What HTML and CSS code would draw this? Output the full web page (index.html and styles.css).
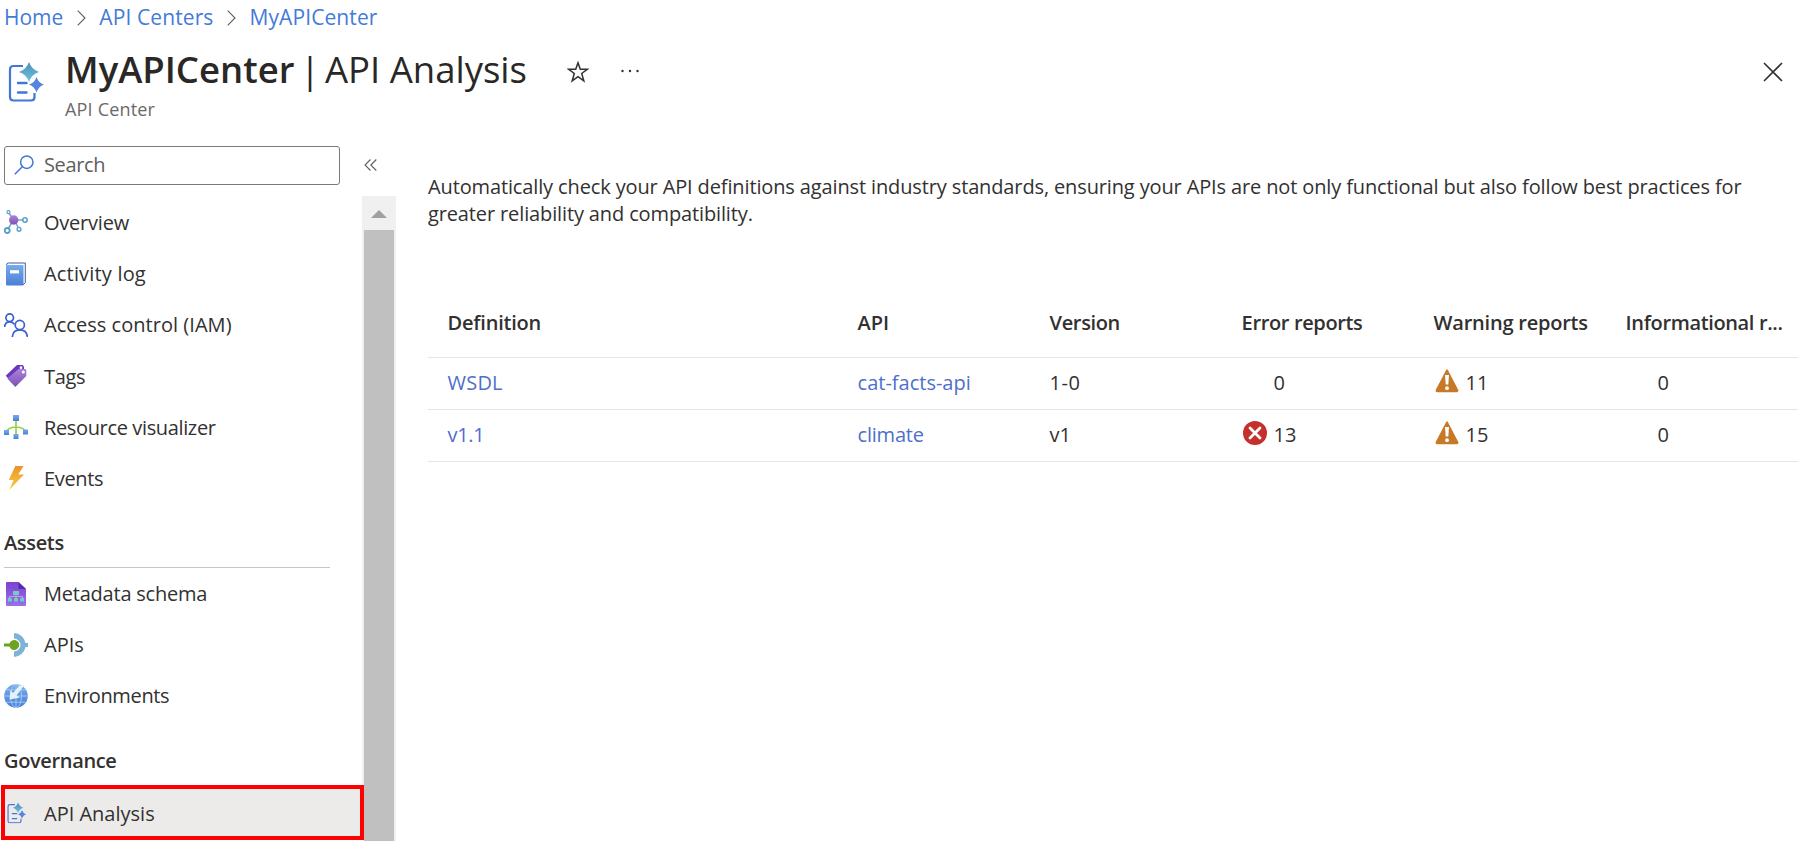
FILE: index.html
```html
<!DOCTYPE html>
<html lang="en">
<head>
<meta charset="utf-8">
<title>MyAPICenter | API Analysis</title>
<link rel="stylesheet" href="styles.css">
</head>
<body>
<svg class="defs" width="0" height="0" aria-hidden="true">
  <defs>
    <linearGradient id="g-teal" x1="0" y1="0" x2="0" y2="1"><stop offset="0" stop-color="#4a8fb5"/><stop offset="1" stop-color="#6cc4e0"/></linearGradient>
    <linearGradient id="g-blue" x1="0" y1="0" x2="0" y2="1"><stop offset="0" stop-color="#76acea"/><stop offset="1" stop-color="#4a7fd6"/></linearGradient>
    <linearGradient id="g-purple" x1="0" y1="0" x2="0" y2="1"><stop offset="0" stop-color="#ab82dc"/><stop offset="1" stop-color="#7d51b4"/></linearGradient>
    <linearGradient id="g-doc" x1="0" y1="0" x2="0" y2="1"><stop offset="0" stop-color="#7a44cf"/><stop offset="1" stop-color="#9d6cf0"/></linearGradient>
    <linearGradient id="g-bolt" x1="0" y1="0" x2="0" y2="1"><stop offset="0" stop-color="#e8922c"/><stop offset="1" stop-color="#fbd03f"/></linearGradient>
    <symbol id="i-analysis" viewBox="0 0 36 40">
      <path d="M15 4H5.500Q2 4 2 7.500V35Q2 38.500 5.500 38.500H23Q26.500 38.500 26.500 35V31" fill="none" stroke="#4277d5" stroke-width="2.200"/>
      <path d="M10 21h8.500M10 30.500h8.500" stroke="#4277d5" stroke-width="2.400" stroke-linecap="round"/>
      <path d="M21 0Q23.500 7.500 31 10Q23.500 12.500 21 20Q18.500 12.500 11 10Q18.500 7.500 21 0Z" fill="url(#g-teal)"/>
      <path d="M28.500 15Q30.500 21 36 22.500Q30.500 24.500 28.500 30.500Q26.500 24.500 21 22.500Q26.500 21 28.500 15Z" fill="#5585e0"/>
    </symbol>
    <symbol id="i-warning" viewBox="0 0 24 24">
      <path d="M11 1.200Q12 -.5 13 1.200L23.300 21Q23.800 23.200 22 23.200H2Q.2 23.200 .7 21Z" fill="#c67a27"/>
      <path d="M10 6H14L13.300 15.500H10.700Z" fill="#fff"/><circle cx="12" cy="19.200" r="1.900" fill="#fff"/>
    </symbol>
  </defs>
</svg>
<div class="page">
  <nav class="breadcrumb">
    <a>Home</a>
    <svg class="chev" viewBox="0 0 9 16"><path d="M.7 .7L8 8L.7 15.300"/></svg>
    <a class="bc">API Centers</a>
    <svg class="chev" viewBox="0 0 9 16"><path d="M.7 .7L8 8L.7 15.300"/></svg>
    <a class="bc">MyAPICenter</a>
  </nav>
  <header class="header">
    <svg class="header-icon"><use href="#i-analysis"/></svg>
    <div class="titles">
      <div class="title-row">
        <h1 class="title"><span class="title-strong">MyAPICenter</span><span class="title-bar">|</span><span class="title-light">API Analysis</span></h1>
        <svg class="star" viewBox="0 0 22 22"><path d="M11 1.800L13.300 8.300H20.300L14.700 12.500L16.800 19.800L11 15.600L5.200 19.800L7.300 12.500L1.700 8.300H8.700Z"/></svg>
        <svg class="dots" viewBox="0 0 18 4"><circle cx="1.500" cy="2" r="1.200"/><circle cx="9" cy="2" r="1.200"/><circle cx="16.500" cy="2" r="1.200"/></svg>
      </div>
      <div class="subtitle loose">API Center</div>
    </div>
    <svg class="close" viewBox="0 0 20 20"><path d="M1 1L19 19M19 1L1 19"/></svg>
  </header>
  <div class="body">
    <aside class="sidebar">
      <div class="search-row">
        <div class="search">
          <svg class="search-icon" viewBox="0 0 20 20"><circle cx="12.800" cy="7.200" r="6.200"/><path d="M8.300 11.700L.8 19.200"/></svg>
          <span class="tight">Search</span>
        </div>
        <svg class="collapse" viewBox="0 0 13 12"><path d="M6.500 .5L1 6L6.500 11.500M12.300 .5L6.800 6L12.300 11.500"/></svg>
      </div>
      <div class="menu-wrap">
        <div class="menu">
          <a class="item"><svg class="icon" viewBox="0 0 24 24"><path d="M9.500 10L5 3M10 10H19M9.500 10L4 19M10 10L14.500 18" stroke="#69a9d2" stroke-width="1.500"/><circle cx="9.700" cy="10" r="4.700" fill="url(#g-purple)"/><g fill="#fff" stroke="#5a9fca"><circle cx="4.500" cy="2.200" r="1.500" stroke-width="1.200"/><circle cx="21" cy="10" r="2.200" stroke-width="1.500"/><circle cx="3.200" cy="20.500" r="2.500" stroke-width="1.900"/><circle cx="15" cy="19.300" r="1.900" stroke-width="1.400"/></g></svg><span class="snug">Overview</span></a>
          <a class="item"><svg class="icon" viewBox="0 0 24 24"><path d="M2.500 3Q2.500 1 4.500 1H21.300V20.500L19 23" fill="#fff" stroke="#3e5c9c" stroke-width="1"/><rect x="2" y="3" width="17.500" height="20.500" rx="1" fill="url(#g-blue)"/><rect x="6" y="8.200" width="9" height="3.200" fill="#fff"/></svg><span class="loose">Activity log</span></a>
          <a class="item"><svg class="icon" viewBox="0 0 24 24" fill="none" stroke="#3b5fd6" stroke-width="1.700"><circle cx="5.700" cy="4.700" r="3.800"/><path d="M.6 14C.8 10.600 2.800 8.800 5.700 8.800C7.800 8.800 9.500 9.800 10.300 11.300"/><circle cx="15.800" cy="12" r="4.600"/><path d="M8.300 24C8.700 19.500 11.500 16.900 15.800 16.900C20 16.900 23 19.500 23.400 24"/></svg><span class="iam">Access control (IAM)</span></a>
          <a class="item"><svg class="icon" viewBox="0 0 24 24"><path d="M13 1H18.500L20 2.500V8L8 18L1.700 11.700Z" fill="#6a37c4"/><path d="M14.500 5H21Q22.300 5 22.300 6.500V12L11.300 23L3.300 14.500Z" fill="url(#g-purple)"/><circle cx="17" cy="3.700" r="1.400" fill="#fff"/><circle cx="19.300" cy="8" r="1.500" fill="#fff"/></svg><span class="tight">Tags</span></a>
          <a class="item"><svg class="icon" viewBox="0 0 24 24"><path d="M12 5V20M3 17C3 13 9 12 12 12S21 13 21 17" fill="none" stroke="#9bd14b" stroke-width="1.700"/><g fill="url(#g-blue)"><rect x="9" y="0" width="6" height="6"/><rect x="0" y="15" width="5" height="5"/><rect x="9.500" y="19" width="5" height="5"/><rect x="19" y="14.500" width="5" height="5"/></g></svg><span class="tight">Resource visualizer</span></a>
          <a class="item"><svg class="icon" viewBox="0 0 24 24"><path d="M11.300 0H19.500L14.300 8.500H20L5.300 24L9.500 14H4.800Z" fill="url(#g-bolt)"/></svg><span class="tight">Events</span></a>
          <h2 class="group ruled">Assets</h2>
          <a class="item"><svg class="icon" viewBox="0 0 24 24"><path d="M3 0H14.500L22 7V23Q22 24 21 24H3Q2 24 2 23V1Q2 0 3 0Z" fill="url(#g-doc)"/><path d="M14.500 0L22 7H14.500Z" fill="#5a2ba8"/><path d="M12 12V17M5.500 17V14.500H18.500V17" fill="none" stroke="#b9a6ea" stroke-width="1"/><g fill="#6fd0bd"><rect x="9" y="9" width="6" height="4"/><rect x="3.800" y="16" width="4" height="3.500"/><rect x="10" y="16" width="4" height="3.500"/><rect x="16.200" y="16" width="4" height="3.500"/></g></svg><span class="snug">Metadata schema</span></a>
          <a class="item"><svg class="icon" viewBox="0 0 24 24"><path d="M10 0A12 12 0 0 1 21.500 10H24V14H21.500A12 12 0 0 1 10 24V18.500A6.500 6.500 0 0 0 10 5.500Z" fill="#7db3d8"/><path d="M0 10.500H5.500A5 5 0 1 1 5.500 13.500H0Z" fill="#6ea321"/></svg><span>APIs</span></a>
          <a class="item"><svg class="icon" viewBox="0 0 24 24"><circle cx="12" cy="12" r="11.800" fill="url(#g-blue)"/><g fill="none" stroke="#a5c8f2" stroke-width="1"><ellipse cx="12" cy="12" rx="5.500" ry="11.500"/><path d="M12 .5V23.500M.5 12H23.500M2.500 5.800H21.500M2.500 18.200H21.500"/></g><path d="M20.500 1L15.500 1.500L9 9L6.500 6L5.500 15.500L16 13.500L12.500 11.500Z" fill="#e3f2fc"/></svg><span class="tight">Environments</span></a>
          <h2 class="group last">Governance</h2>
          <a class="item selected"><svg class="icon-small" viewBox="0 0 36 40"><use href="#i-analysis"/></svg><span>API Analysis</span></a>
        </div>
        <div class="scrollbar"><div class="scroll-up"></div><div class="scroll-thumb"></div></div>
      </div>
    </aside>
    <main class="content">
      <p class="intro">Automatically check your API definitions against industry standards, ensuring your APIs are not only functional but also follow best practices for<br>greater reliability and compatibility.</p>
      <div class="table">
        <div class="row head"><span class="snug">Definition</span><span>API</span><span class="tight">Version</span><span class="tight">Error reports</span><span class="snug">Warning reports</span><span class="tight">Informational r...</span></div>
        <div class="row"><a class="loose">WSDL</a><a>cat-facts-api</a><span class="looser">1-0</span><span class="count"><svg class="status"></svg>0</span><span class="count"><svg class="status"><use href="#i-warning"/></svg>11</span><span class="count"><svg class="status"></svg>0</span></div>
        <div class="row"><a class="tight">v1.1</a><a class="snug">climate</a><span>v1</span><span class="count"><svg class="status" viewBox="0 0 24 24"><circle cx="12" cy="12" r="12" fill="#c4302b"/><path d="M7 7L17 17M17 7L7 17" stroke="#fff" stroke-width="2.800" stroke-linecap="round"/></svg>13</span><span class="count"><svg class="status"><use href="#i-warning"/></svg>15</span><span class="count"><svg class="status"></svg>0</span></div>
      </div>
    </main>
  </div>
</div>
</body>
</html>
```
FILE: styles.css
```css
* { box-sizing: border-box; }
html, body { margin: 0; height: 100%; overflow: hidden; background: #fff; }
body { font-family: "Open Sans", "Noto Sans", sans-serif; font-size: 20px; color: #323130; }
svg { display: block; flex: none; }
.tight { letter-spacing: -.36px; }
.snug { letter-spacing: -.22px; }
.loose { letter-spacing: .18px; }
.looser { letter-spacing: .5px; }
.iam { letter-spacing: .04px; }
.bc { letter-spacing: .1px; }
.defs { position: absolute; }
.page { height: 841px; display: flex; flex-direction: column; overflow: hidden; }
.breadcrumb { height: 35px; padding-left: 4px; display: flex; align-items: center; color: #447bd8; font-size: 21px; white-space: nowrap; }
.breadcrumb a { padding-bottom: 1px; }
.chev { width: 9px; height: 16px; margin: 0 13px 0 14px; fill: none; stroke: #605e5c; stroke-width: 1.1; }
.header { height: 111px; padding-top: 1px; display: flex; align-items: flex-start; }
.header-icon { width: 36px; height: 40px; margin: 26px 0 0 8px; }
.titles { margin-left: 21px; flex: 1; }
.title-row { display: flex; align-items: center; height: 66px; }
.title { margin: 0; font-size: 36.500px; line-height: 66px; font-weight: 400; white-space: nowrap; color: #292827; display: flex; padding-bottom: 1px; }
.title-strong { font-weight: 600; width: 230px; }
.title-bar { width: 30px; text-align: center; }
.title-light { width: 203px; }
.star { width: 22px; height: 22px; margin-left: 39px; margin-top: 5px; fill: none; stroke: #323130; stroke-width: 1.5; }
.dots { width: 18px; height: 4px; margin-left: 32px; margin-top: 4px; fill: #323130; }
.subtitle { font-size: 18px; color: #6b6967; line-height: 14px; }
.close { width: 20px; height: 20px; margin: 26px 15.500px 0 0; stroke: #323130; stroke-width: 1.6; }
.body { flex: 1; display: flex; min-height: 0; }
.sidebar { width: 396px; display: flex; flex-direction: column; flex: none; }
.search-row { display: flex; align-items: center; height: 38.500px; }
.search { width: 336px; height: 38.500px; margin-left: 4px; border: 1px solid #7c7a78; border-radius: 3px; display: flex; align-items: center; gap: 10px; padding-left: 9px; color: #605e5c; }
.search span { padding-bottom: 2px; }
.search-icon { width: 20px; height: 20px; fill: none; stroke: #4277d5; stroke-width: 1.500; }
.collapse { width: 13px; height: 12px; margin-left: 24px; fill: none; stroke: #605e5c; stroke-width: 1.100; }
.menu-wrap { flex: 1; display: flex; margin-top: 11.500px; min-height: 0; }
.menu { width: 362px; padding-top: .4px; flex: none; position: relative; z-index: 1; }
.item { display: flex; align-items: center; height: 51.200px; padding-left: 4px; gap: 16px; white-space: nowrap; }
.item span { padding-top: 1px; }
.icon { width: 24px; height: 24px; margin-top: 1px; }
.icon-small { width: 19px; height: 22px; }
.group { margin: 0 0 0 4px; width: 326px; height: 64px; padding-top: 25px; font-size: 20px; line-height: 28px; font-weight: 600; letter-spacing: -.35px; }
.last { padding-top: 26px; }
.ruled { border-bottom: 1px solid #c8c6c4; }
.selected { width: 363px; height: 55px; margin-left: 1px; padding-left: 2px; gap: 18px; background: #edebe9; border: 4px solid #f00; }
.scrollbar { width: 34px; background: #f0f0f0; padding: 0 2px; display: flex; flex-direction: column; }
.scroll-up { height: 34px; display: flex; align-items: center; justify-content: center; }
.scroll-up::before { content: ""; margin-top: 2px; border: 8px solid transparent; border-top: 0; border-bottom: 8px solid #a0a0a0; }
.scroll-thumb { flex: 1; background: #c0c0c0; }
.content { flex: 1; padding: 27px 0 0 32px; min-width: 0; }
.intro { margin: 0; line-height: 27px; white-space: nowrap; letter-spacing: -.13px; }
.table { margin-top: 60px; }
.row { display: grid; grid-template-columns: 410px 192px 192px 192px 192px 192px; height: 52px; align-items: center; border-bottom: 1px solid #e6e5e4; padding-bottom: 2px; }
.row > * { padding-left: 19.600px; white-space: nowrap; }
.row > a { color: #4e6fcb; }
.head { height: 71px; font-weight: 600; padding-bottom: 0; }
.count { display: flex; align-items: center; gap: 7px; }
.status { width: 24px; height: 24px; margin: -4px 0 0 1px; }
```
